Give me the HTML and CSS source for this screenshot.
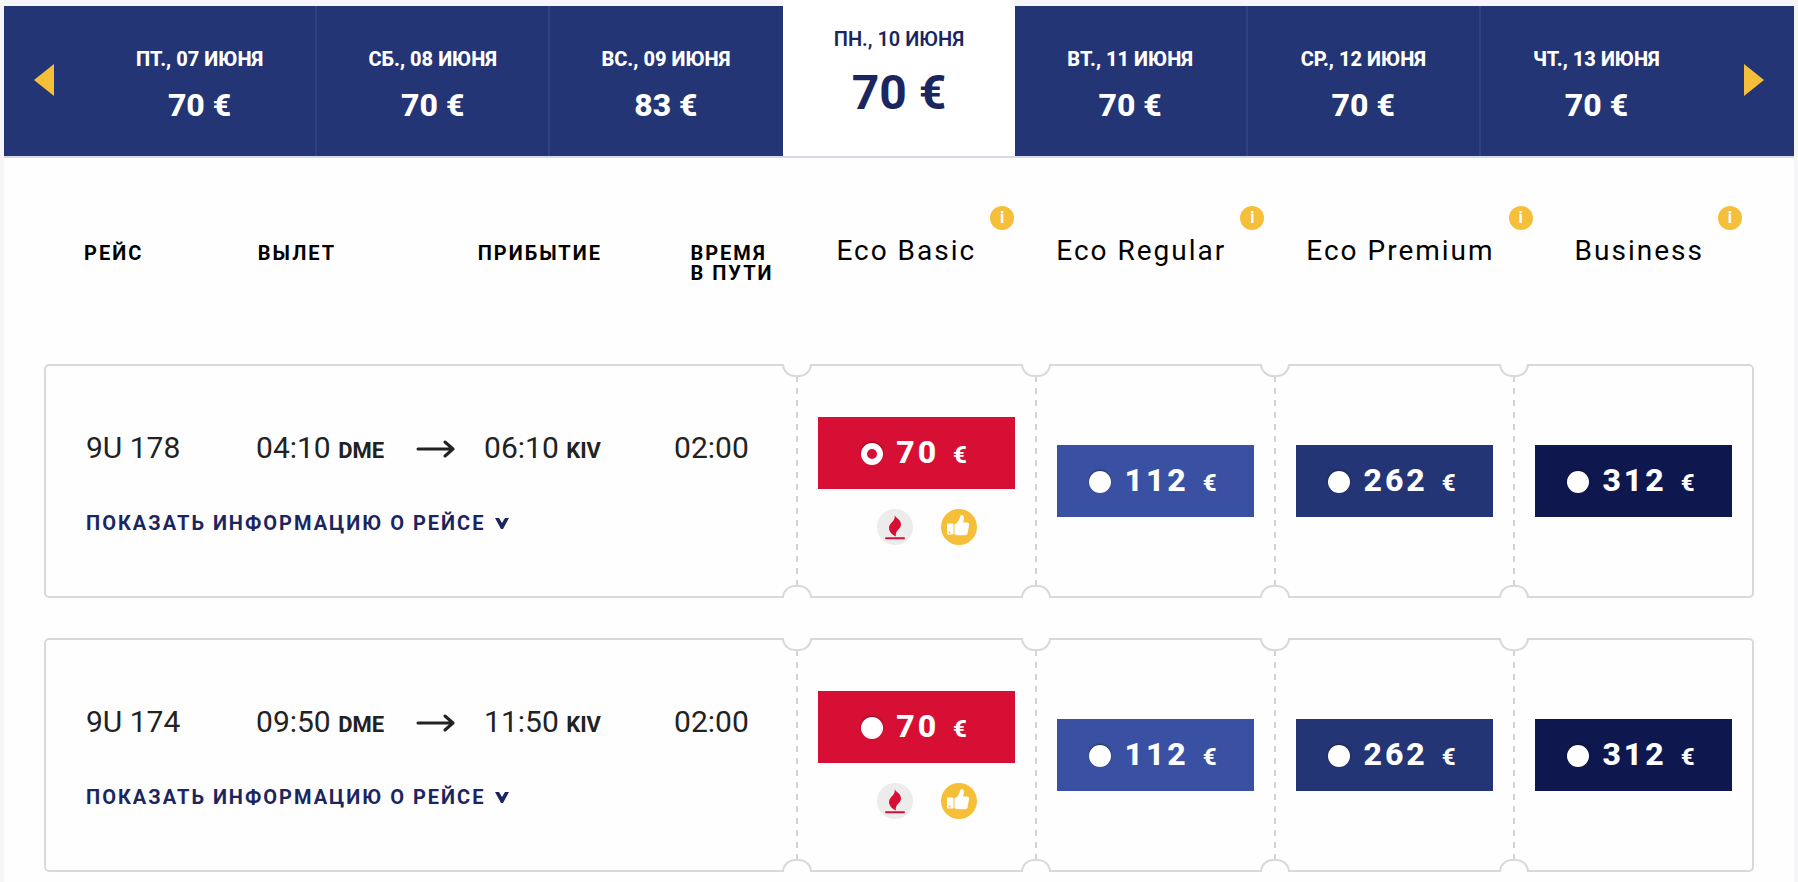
FILE: index.html
```html
<!DOCTYPE html>
<html lang="ru">
<head>
  <meta charset="UTF-8" />
  <meta name="viewport" content="width=device-width, initial-scale=1" />
  <title>Выбор рейса</title>
  <link rel="stylesheet" href="styles.css">
</head>
<body>

  <svg class="sprite" aria-hidden="true">
    <symbol id="arrow" viewBox="0 0 40 20">
      <path d="M2 9h35M29 2l8 7-8 7" fill="none" stroke="currentColor" stroke-width="3" stroke-linecap="round" stroke-linejoin="round" />
    </symbol>
    <symbol id="chevron" viewBox="0 0 14 12">
      <path d="M0 1h4l3 5 3-5h4L8 12H6z" fill="currentColor" />
    </symbol>
    <symbol id="flame" viewBox="0 0 36 36">
      <circle cx="18" cy="18" r="18" fill="#ececed" />
      <path d="M17.500 5.500C18 9 24 10 24 15.500 24 20 17.500 21.500 19 27.500 15 26 12 22.500 12 19 12 13.500 19.500 12 17.500 5.500z" fill="#d80f35" />
      <path d="M9 29.200h18" stroke="#d80f35" stroke-width="2" stroke-linecap="round" />
    </symbol>
    <symbol id="thumb" viewBox="0 0 36 36">
      <circle cx="18" cy="18" r="18" fill="#f6bf3a" />
      <rect x="6" y="14.500" width="6.500" height="11" rx="1" fill="#fff" />
      <path d="M13.500 15.500c3-1.500 4.500-4 5.500-7.500.4-1.500 1-2.200 2-2 1.700.3 2.200 2.200 1.800 4.200l-.8 3.300h4.200c1.500 0 2.200 1 1.900 2.400l-1.500 8.100c-.3 1.500-1.200 2.200-2.600 2.200h-6.500c-1.500 0-2.500-.3-4-.9z" fill="#fff" />
      <circle cx="8.500" cy="23.500" r="1" fill="#f6bf3a" />
    </symbol>
  </svg>

  <nav class="calendar">
    <button class="nav-btn" type="button" aria-label="Назад"><span class="tri tri-left"></span></button>
    <a class="day" href="#"><span class="date">ПТ., 07 ИЮНЯ</span><span class="price">70 €</span></a>
    <a class="day" href="#"><span class="date">СБ., 08 ИЮНЯ</span><span class="price">70 €</span></a>
    <a class="day" href="#"><span class="date">ВС., 09 ИЮНЯ</span><span class="price">83 €</span></a>
    <a class="day active" href="#"><span class="date">ПН., 10 ИЮНЯ</span><span class="price">70 €</span></a>
    <a class="day" href="#"><span class="date">ВТ., 11 ИЮНЯ</span><span class="price">70 €</span></a>
    <a class="day" href="#"><span class="date">СР., 12 ИЮНЯ</span><span class="price">70 €</span></a>
    <a class="day" href="#"><span class="date">ЧТ., 13 ИЮНЯ</span><span class="price">70 €</span></a>
    <button class="nav-btn" type="button" aria-label="Вперёд"><span class="tri tri-right"></span></button>
  </nav>

  <main>
    <div class="head">
      <div class="head-info">
        <span>РЕЙС</span>
        <span>ВЫЛЕТ</span>
        <span>ПРИБЫТИЕ</span>
        <span>ВРЕМЯ<br>В ПУТИ</span>
      </div>
      <div class="head-fares">
        <div class="fare-name">Eco Basic<button class="info" type="button">i</button></div>
        <div class="fare-name">Eco Regular<button class="info" type="button">i</button></div>
        <div class="fare-name">Eco Premium<button class="info" type="button">i</button></div>
        <div class="fare-name">Business<button class="info" type="button">i</button></div>
      </div>
    </div>

    <section class="flight">
      <div class="details">
        <div class="route">
          <span>9U 178</span>
          <span class="departure"><span>04:10 <b>DME</b></span><svg class="arrow"><use href="#arrow" /></svg></span>
          <span>06:10 <b>KIV</b></span>
          <span>02:00</span>
        </div>
        <a class="more" href="#">ПОКАЗАТЬ ИНФОРМАЦИЮ О РЕЙСЕ<svg class="chevron"><use href="#chevron" /></svg></a>
      </div>
      <div class="fare">
        <label class="buy basic"><input type="radio" name="fare" checked><span>70</span><small>€</small></label>
        <div class="tags">
          <svg class="tag"><use href="#flame" /></svg>
          <svg class="tag"><use href="#thumb" /></svg>
        </div>
      </div>
      <div class="fare">
        <label class="buy regular"><input type="radio" name="fare"><span>112</span><small>€</small></label>
      </div>
      <div class="fare">
        <label class="buy premium"><input type="radio" name="fare"><span>262</span><small>€</small></label>
      </div>
      <div class="fare">
        <label class="buy business"><input type="radio" name="fare"><span>312</span><small>€</small></label>
      </div>
    </section>

    <section class="flight">
      <div class="details">
        <div class="route">
          <span>9U 174</span>
          <span class="departure"><span>09:50 <b>DME</b></span><svg class="arrow"><use href="#arrow" /></svg></span>
          <span>11:50 <b>KIV</b></span>
          <span>02:00</span>
        </div>
        <a class="more" href="#">ПОКАЗАТЬ ИНФОРМАЦИЮ О РЕЙСЕ<svg class="chevron"><use href="#chevron" /></svg></a>
      </div>
      <div class="fare">
        <label class="buy basic"><input type="radio" name="fare"><span>70</span><small>€</small></label>
        <div class="tags">
          <svg class="tag"><use href="#flame" /></svg>
          <svg class="tag"><use href="#thumb" /></svg>
        </div>
      </div>
      <div class="fare">
        <label class="buy regular"><input type="radio" name="fare"><span>112</span><small>€</small></label>
      </div>
      <div class="fare">
        <label class="buy premium"><input type="radio" name="fare"><span>262</span><small>€</small></label>
      </div>
      <div class="fare">
        <label class="buy business"><input type="radio" name="fare"><span>312</span><small>€</small></label>
      </div>
    </section>
  </main>

</body>
</html>
```

FILE: styles.css
```css
*, *::before, *::after {
  box-sizing: border-box;
}
body {
  font-family: Roboto, "Liberation Sans", sans-serif;
  background: #f6f6f9;
  margin: 0;
  padding: 6px 4px 0;
  color: #222;
}
a {
  text-decoration: none;
}
button {
  font-family: inherit;
  border: none;
  padding: 0;
  cursor: pointer;
}
.sprite {
  display: none;
}

/* Календарь цен */
.calendar {
  display: flex;
  height: 152px;
  background: #243575;
  border-bottom: 2px solid #d5d9e6;
}
.nav-btn {
  flex: 0 0 80px;
  display: flex;
  align-items: center;
  justify-content: center;
  padding-bottom: 2px;
  background: none;
}
.tri {
  border: 16px solid transparent;
}
.tri-left {
  border-left-width: 0;
  border-right: 20px solid #f6bf3a;
}
.tri-right {
  border-right-width: 0;
  border-left: 20px solid #f6bf3a;
}
.day {
  flex: 1;
  display: flex;
  flex-direction: column;
  align-items: center;
  padding-top: 41px;
  color: #fff;
  font-weight: 800;
  border-right: 2px solid #2e4184;
}
.day:nth-child(4), .day:nth-child(8) {
  border-right-color: transparent;
}
.date {
  font-size: 20px;
  line-height: 24px;
}
.price {
  margin-top: 16px;
  font-size: 32px;
  line-height: 36px;
}
.day.active {
  margin-top: -6px;
  padding-top: 27px;
  background: #fff;
  color: #1b2660;
  font-weight: bold;
  border: none;
}
.active .date {
  font-weight: 600;
}
.active .price {
  margin-top: 14px;
  font-size: 48px;
  line-height: 56px;
}

main {
  background: #fefefe;
  padding: 0 40px 10px;
}

/* Заголовки колонок */
.head {
  display: flex;
  height: 206px;
  padding-top: 48px;
  color: #000;
}
.head-info {
  flex: 0 0 44%;
  display: grid;
  grid-template-columns: 174fr 220fr 213fr 106fr;
  padding: 37px 0 0 40px;
  font-size: 20px;
  font-weight: bold;
  line-height: 20px;
  letter-spacing: 2px;
}
.head-fares {
  flex: 1;
  display: flex;
  justify-content: space-between;
  padding: 0 12px 0 40px;
}
.fare-name {
  display: flex;
  gap: 14px;
  padding-top: 29px;
  font-size: 28px;
  line-height: 32px;
  letter-spacing: 2px;
}
.info {
  width: 24px;
  height: 24px;
  margin-top: -29px;
  border-radius: 50%;
  background: #f6bf3a;
  color: #fff;
  font-size: 16px;
  font-weight: bold;
  line-height: 24px;
}

/* Билет */
.flight {
  display: grid;
  grid-template-columns: 882fr repeat(4, 281fr);
  height: 234px;
  margin-bottom: 40px;
  border: 2px solid #d9d9d9;
  border-radius: 5px;
}
.flight:last-child {
  margin-bottom: 0;
}
.details {
  padding: 64px 0 0 40px;
}
.route {
  display: grid;
  grid-template-columns: 170fr 228fr 190fr 122fr;
  font-size: 30px;
  line-height: 36px;
}
.route b {
  font-size: 22px;
}
.departure {
  display: flex;
  justify-content: space-between;
  align-items: center;
  padding-right: 28px;
}
.arrow {
  width: 40px;
  height: 20px;
}
.more {
  display: flex;
  align-items: center;
  gap: 10px;
  margin-top: 42px;
  color: #1b2660;
  font-size: 20px;
  font-weight: bold;
  line-height: 24px;
  letter-spacing: 2px;
}
.chevron {
  width: 14px;
  height: 12px;
}
.fare {
  position: relative;
  display: flex;
  flex-direction: column;
  justify-content: center;
  gap: 20px;
  padding: 0 20px 0 22px;
  background: repeating-linear-gradient(#d3d3d3 0 6px, transparent 6px 12px) 0 -2px / 2px 120% no-repeat;
}
/* вырезы по линии отрыва */
.fare::before,
.fare::after {
  content: "";
  position: absolute;
  left: -14px;
  width: 30px;
  height: 13px;
  background: #fefefe;
  border: 2px solid #d9d9d9;
}
.fare::before {
  top: -2px;
  border-top: none;
  border-radius: 0 0 14px 14px;
}
.fare::after {
  bottom: -2px;
  border-bottom: none;
  border-radius: 14px 14px 0 0;
}
.buy {
  display: flex;
  align-items: baseline;
  justify-content: center;
  height: 72px;
  padding-right: 2px;
  color: #fff;
  font-size: 32px;
  font-weight: 800;
  line-height: 70px;
  letter-spacing: 3px;
  cursor: pointer;
}
.buy input {
  appearance: none;
  align-self: center;
  width: 22px;
  height: 22px;
  margin: 2px 13px 0 0;
  border-radius: 50%;
  background: #fff;
  box-shadow: 0 -1px 2px rgba(0,0,0,0.4);
}
.buy input:checked {
  background: #d80f35;
  border: 6px solid #fff;
}
.buy small {
  margin-left: 14px;
  font-size: 24px;
}
.basic { background: #d80f35; }
.regular { background: #3a50a2; }
.premium { background: #243575; }
.business { background: #0f174f; }
.tags {
  display: flex;
  justify-content: center;
  gap: 28px;
  padding-left: 20px;
}
.tag {
  width: 36px;
  height: 36px;
}
```
